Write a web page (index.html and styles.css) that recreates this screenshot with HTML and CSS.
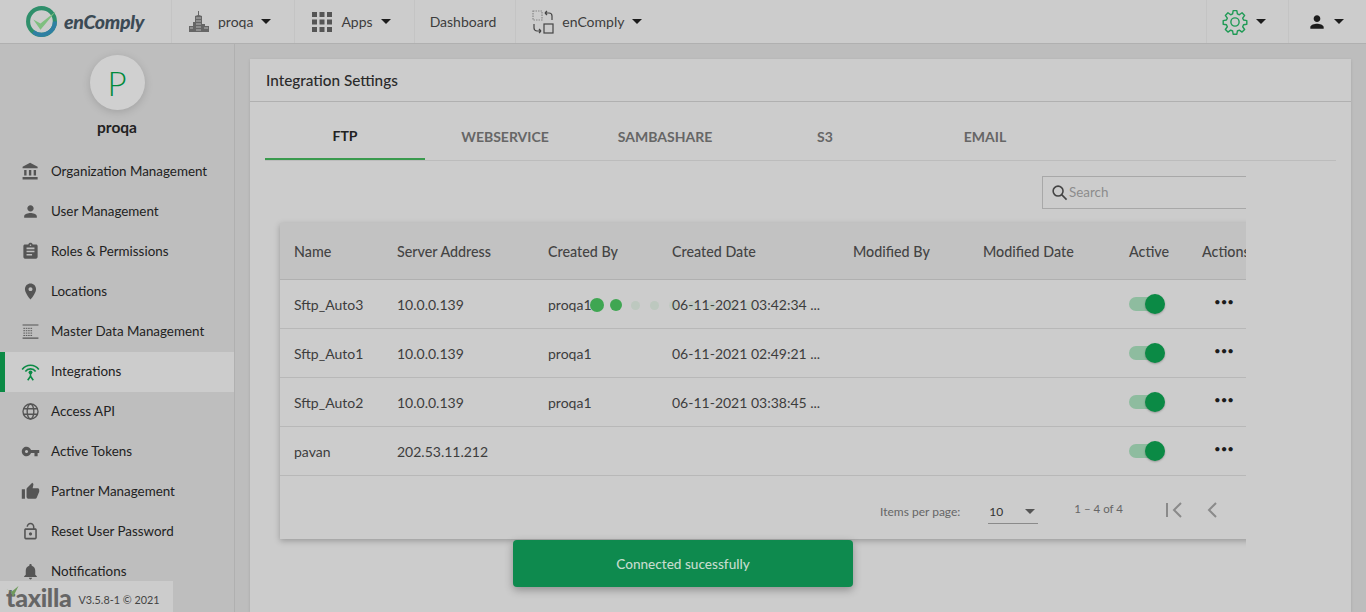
FILE: index.html
```html
<!DOCTYPE html>
<html lang="en">
<head>
<meta charset="utf-8"/>
<meta content="width=device-width, initial-scale=1.0" name="viewport"/>
<title>enComply – Integration Settings</title>
<link rel="stylesheet" href="styles.css">
</head>
<body>
<header class="topbar">
  <div class="brand">
    <svg class="brand-logo" viewBox="0 0 32 32" width="33" height="33">
      <circle cx="16" cy="16" r="13" fill="none" stroke="#2f8f6b" stroke-width="4"/>
      <path d="M29 16a13 13 0 0 1-21 10" fill="none" stroke="#2f7fa3" stroke-width="4"/>
      <path d="M8 14l7 4L30 6 15 24z" fill="#7fbf7f"/>
    </svg>
    <span class="brand-name">enComply</span>
  </div>
  <div class="top-item">
    <svg class="top-icon" viewBox="0 0 22 24" width="22" height="24"><path d="M1 22v-6h4v-4h2V6l3-1V1h1v4l3 1v8h3v2h4v6z" fill="#666"/><path d="M8 8h5M8 11h5M8 14h5M8 17h5M8 20h5M2 18h3M16 18h4" stroke="#ccc" stroke-width=".8"/></svg>
    <span>proqa</span><i class="caret"></i>
  </div>
  <div class="top-item">
    <svg class="top-icon" viewBox="0 0 22 22" width="22" height="22"><path d="M1 1h5v5H1zM8.500 1h5v5h-5zM16 1h5v5h-5zM1 8.500h5v5H1zM8.500 8.500h5v5h-5zM16 8.500h5v5h-5zM1 16h5v5H1zM8.500 16h5v5h-5zM16 16h5v5h-5z" fill="#555"/></svg>
    <span>Apps</span><i class="caret"></i>
  </div>
  <div class="top-item top-plain"><span>Dashboard</span></div>
  <div class="top-item">
    <svg class="top-icon" viewBox="0 0 22 24" width="22" height="24" fill="none" stroke="#444" stroke-width="1.200"><rect x="1" y="1" width="9" height="9" stroke="#888" stroke-dasharray="1.500 1"/><rect x="12" y="14" width="9" height="9"/><path d="M13 3h4a3 3 0 0 1 3 3v4M13 3l2-2M13 3l2 2M9 21H5a3 3 0 0 1-3-3v-4M9 21l-2-2M9 21l-2 2"/></svg>
    <span>enComply</span><i class="caret"></i>
  </div>
  <div class="top-right">
    <div class="top-item top-gear">
      <svg viewBox="0 0 24 24" width="26" height="26" fill="none" stroke="#1f9a55" stroke-width="1.300"><path d="M10.300 1.500h3.400l.5 3 1.800.8 2.500-1.800 2.400 2.400-1.800 2.500.8 1.800 3 .5v3.400l-3 .5-.8 1.800 1.800 2.500-2.400 2.400-2.500-1.800-1.800.8-.5 3h-3.400l-.5-3-1.800-.8-2.500 1.800-2.400-2.400 1.800-2.500-.8-1.800-3-.5v-3.400l3-.5.8-1.800-1.800-2.500 2.400-2.400 2.500 1.800 1.800-.8z" stroke-linejoin="round"/><circle cx="12" cy="12" r="3.800"/></svg>
      <i class="caret"></i>
    </div>
    <div class="top-item top-user">
      <svg viewBox="0 0 24 24" width="20" height="20"><path d="M12 12c2.210 0 4-1.790 4-4s-1.790-4-4-4-4 1.790-4 4 1.790 4 4 4zm0 2c-2.670 0-8 1.340-8 4v2h16v-2c0-2.660-5.330-4-8-4z" fill="#1c1c1c"/></svg>
      <i class="caret"></i>
    </div>
  </div>
</header>

<div class="layout">
  <aside class="sidebar">
    <div class="avatar">P</div>
    <div class="profile-name">proqa</div>
    <nav class="side-nav">
      <a class="side-item"><svg viewBox="0 0 24 24"><path d="M4 10v7h3v-7H4zm6 0v7h3v-7h-3zM2 22h19v-3H2v3zm14-12v7h3v-7h-3zm-4.500-9L2 6v2h19V6l-9.500-5z"/></svg>Organization Management</a>
      <a class="side-item"><svg viewBox="0 0 24 24"><path d="M12 12c2.210 0 4-1.790 4-4s-1.790-4-4-4-4 1.790-4 4 1.790 4 4 4zm0 2c-2.670 0-8 1.340-8 4v2h16v-2c0-2.660-5.330-4-8-4z"/></svg>User Management</a>
      <a class="side-item"><svg viewBox="0 0 24 24"><path d="M19 3h-4.180C14.400 1.840 13.300 1 12 1c-1.300 0-2.400.84-2.820 2H5c-1.100 0-2 .9-2 2v14c0 1.100.9 2 2 2h14c1.100 0 2-.9 2-2V5c0-1.100-.9-2-2-2zm-7 0c.55 0 1 .45 1 1s-.45 1-1 1-1-.45-1-1 .45-1 1-1zm2 14H7v-2h7v2zm3-4H7v-2h10v2zm0-4H7V7h10v2z"/></svg>Roles &amp; Permissions</a>
      <a class="side-item"><svg viewBox="0 0 24 24"><path d="M12 2C8.130 2 5 5.130 5 9c0 5.250 7 13 7 13s7-7.750 7-13c0-3.870-3.130-7-7-7zm0 9.500c-1.380 0-2.500-1.120-2.500-2.500s1.120-2.500 2.500-2.500 2.500 1.120 2.500 2.500-1.120 2.500-2.500 2.500z"/></svg>Locations</a>
      <a class="side-item"><svg viewBox="0 0 24 24"><path d="M2 3h20v1.500H2zM2 19.500h20V21H2z"/><path d="M3 8h12M3 11h12M3 14h12M3 17h12" stroke="#555" stroke-width="1.200" stroke-dasharray="2 1"/></svg>Master Data Management</a>
      <a class="side-item side-active"><svg viewBox="0 0 24 24" fill="none" stroke="#0b8a45" stroke-width="2"><path d="M1.500 9.500a13 13 0 0 1 21 0M5.500 12a8 8 0 0 1 13 0"/><circle cx="12" cy="13" r="2.400" fill="#0b8a45" stroke="none"/><path d="M12 14v5M12 18l-3.500 5M12 18l3.500 5"/></svg>Integrations</a>
      <a class="side-item"><svg viewBox="0 0 24 24" fill="none" stroke="#555" stroke-width="1.700"><circle cx="12" cy="12" r="9.500"/><ellipse cx="12" cy="12" rx="4.200" ry="9.500"/><path d="M3 8.500h18M3 15.500h18"/></svg>Access API</a>
      <a class="side-item"><svg viewBox="0 0 24 24"><path d="M12.650 10C11.830 7.670 9.610 6 7 6c-3.310 0-6 2.690-6 6s2.690 6 6 6c2.610 0 4.830-1.670 5.650-4H17v4h4v-4h2v-4H12.650zM7 14c-1.100 0-2-.9-2-2s.9-2 2-2 2 .9 2 2-.9 2-2 2z"/></svg>Active Tokens</a>
      <a class="side-item"><svg viewBox="0 0 24 24"><path d="M1 21h4V9H1v12zm22-11c0-1.100-.9-2-2-2h-6.310l.95-4.570.03-.32c0-.41-.17-.79-.44-1.060L14.170 1 7.590 7.590C7.220 7.950 7 8.450 7 9v10c0 1.100.9 2 2 2h9c.83 0 1.540-.5 1.840-1.220l3.020-7.050c.09-.23.14-.47.14-.73v-2z"/></svg>Partner Management</a>
      <a class="side-item"><svg viewBox="0 0 24 24"><path d="M12 17c1.100 0 2-.9 2-2s-.9-2-2-2-2 .9-2 2 .9 2 2 2zm6-9h-1V6c0-2.760-2.240-5-5-5S7 3.240 7 6h1.900c0-1.710 1.390-3.100 3.100-3.100 1.710 0 3.100 1.390 3.100 3.100v2H6c-1.100 0-2 .9-2 2v10c0 1.100.9 2 2 2h12c1.100 0 2-.9 2-2V10c0-1.100-.9-2-2-2zm0 12H6V10h12v10z"/></svg>Reset User Password</a>
      <a class="side-item"><svg viewBox="0 0 24 24"><path d="M12 22c1.100 0 2-.9 2-2h-4c0 1.100.89 2 2 2zm6-6v-5c0-3.070-1.640-5.640-4.500-6.320V4c0-.83-.67-1.500-1.500-1.500s-1.500.67-1.500 1.500v.68C7.630 5.360 6 7.920 6 11v5l-2 2v1h16v-1l-2-2z"/></svg>Notifications</a>
    </nav>
    <div class="powered">
      <span class="taxilla"><svg viewBox="0 0 12 10" width="14" height="11"><path d="M0 3l5 2 6-5-5 10-2-5z" fill="#6f9a5c"/></svg>taxilla</span>
      <span class="version">V3.5.8-1 © 2021</span>
    </div>
  </aside>

  <main class="content">
    <section class="card">
      <h2 class="card-title">Integration Settings</h2>
      <div class="tabs">
        <div class="tab tab-active">FTP</div>
        <div class="tab">WEBSERVICE</div>
        <div class="tab">SAMBASHARE</div>
        <div class="tab">S3</div>
        <div class="tab">EMAIL</div>
      </div>
      <div class="tab-body">
        <div class="search">
          <svg viewBox="0 0 24 24" width="17" height="17" fill="none" stroke="#444" stroke-width="2.200"><circle cx="10" cy="10" r="7"/><path d="M15 15l7 7"/></svg>
          <span>Search</span>
        </div>
        <div class="table-box">
          <table class="grid">
            <thead>
              <tr>
                <th class="c-name">Name</th><th class="c-addr">Server Address</th><th class="c-by">Created By</th><th class="c-date">Created Date</th><th class="c-mby">Modified By</th><th class="c-mdate">Modified Date</th><th class="c-active">Active</th><th class="c-actions">Actions</th>
              </tr>
            </thead>
            <tbody>
              <tr><td>Sftp_Auto3</td><td>10.0.0.139</td><td>proqa1</td><td>06-11-2021 03:42:34 ...</td><td></td><td></td><td><span class="toggle"></span></td><td><span class="more">•••</span></td></tr>
              <tr><td>Sftp_Auto1</td><td>10.0.0.139</td><td>proqa1</td><td>06-11-2021 02:49:21 ...</td><td></td><td></td><td><span class="toggle"></span></td><td><span class="more">•••</span></td></tr>
              <tr><td>Sftp_Auto2</td><td>10.0.0.139</td><td>proqa1</td><td>06-11-2021 03:38:45 ...</td><td></td><td></td><td><span class="toggle"></span></td><td><span class="more">•••</span></td></tr>
              <tr><td>pavan</td><td>202.53.11.212</td><td></td><td></td><td></td><td></td><td><span class="toggle"></span></td><td><span class="more">•••</span></td></tr>
            </tbody>
          </table>
          <div class="pager">
            <span class="pager-label">Items per page:</span>
            <div class="pager-select"><span>10</span><i class="caret caret-grey"></i></div>
            <span class="pager-range">1 – 4 of 4</span>
            <svg viewBox="0 0 24 24" width="24" height="24" fill="none" stroke="#8a8a8a" stroke-width="2"><path d="M5 5v14"/><path d="M19 5l-7 7 7 7"/></svg>
            <svg class="pager-prev" viewBox="0 0 24 24" width="24" height="24" fill="none" stroke="#8a8a8a" stroke-width="2"><path d="M16 5l-7 7 7 7"/></svg>
          </div>
        </div>
      </div>
    </section>
  </main>
</div>

<div class="loader">
  <i class="dot"></i><i class="dot dot-2"></i><i class="dot dot-faint"></i><i class="dot dot-faint"></i><i class="dot dot-fainter"></i><i class="dot dot-fainter"></i><i class="dot dot-fainter"></i><i class="dot dot-fainter"></i><i class="dot dot-fainter"></i>
</div>
<div class="toast">Connected sucessfully</div>
</body>
</html>
```

FILE: styles.css
```css
* {
  box-sizing: border-box;
}
html, body {
  height: 100%;
}
body {
  margin: 0;
  font-family: Lato, sans-serif;
  font-size: 14px;
  color: #333;
  background: #bdbdbd;
  display: flex;
  flex-direction: column;
  overflow: hidden;
}

/* top bar */
.topbar {
  flex: none;
  height: 44px;
  background: #ccc;
  border-bottom: 1px solid #b0b0b0;
  display: flex;
  align-items: stretch;
}
.brand {
  width: 171px;
  display: flex;
  align-items: center;
  padding-left: 25px;
  gap: 6px;
}
.brand-name {
  font-size: 19.5px;
  font-weight: 900;
  font-style: italic;
  color: #3b4a55;
  letter-spacing: -0.3px;
}
.top-item {
  display: flex;
  align-items: center;
  padding: 0 23px 0 16px;
  border-left: 1px solid #c4c4c4;
  color: #3d3d3d;
  font-size: 14px;
}
.top-plain {
  padding: 0 19px 0 15px;
}
.top-icon {
  margin-right: 8px;
}
.caret {
  display: inline-block;
  width: 0;
  height: 0;
  margin-left: 8px;
  border-left: 5px solid transparent;
  border-right: 5px solid transparent;
  border-top: 5px solid #1c1c1c;
}
.caret-grey {
  border-top-color: #555;
}
.topbar > .top-item:last-of-type {
  border-right: 1px solid #c4c4c4;
}
.top-right {
  margin-left: auto;
  display: flex;
}
.top-gear {
  width: 82px;
  padding: 0 0 0 15px;
}
.top-user {
  width: 78px;
  padding: 0 0 0 18px;
}
.top-user .caret {
  margin-left: 7px;
}

/* sidebar */
.layout {
  flex: 1;
  display: flex;
  min-height: 0;
}
.sidebar {
  width: 235px;
  flex: none;
  background: #bebebe;
  border-right: 1px solid #b0b0b0;
  overflow: hidden;
  position: relative;
}
.avatar {
  width: 55px;
  height: 55px;
  margin: 11px auto 0;
  border-radius: 50%;
  background: #d0d0d0;
  box-shadow: 0 2px 8px rgba(0,0,0,0.15);
  color: #008a3c;
  font-size: 33px;
  font-weight: 300;
  display: flex;
  align-items: center;
  justify-content: center;
}
.profile-name {
  margin-top: 8px;
  text-align: center;
  font-size: 15.5px;
  font-weight: 700;
  color: #222;
}
.side-nav {
  margin-top: 16px;
}
.side-item {
  height: 40px;
  display: flex;
  align-items: center;
  padding: 0 0 2px 21px;
  color: #222;
  font-size: 13.4px;
}
.side-item svg {
  width: 19px;
  height: 19px;
  margin-right: 11px;
  fill: #555;
  flex: none;
}
.side-active {
  background: #ccc;
  border-left: 5px solid #0b8a45;
  padding-left: 16px;
}
.side-item svg[fill="none"] {
  fill: none;
}
.powered {
  position: absolute;
  left: 0;
  bottom: 0;
  width: 173px;
  height: 31px;
  background: #ccc;
  display: flex;
  align-items: center;
  padding-left: 6px;
  gap: 7px;
}
.taxilla {
  font-size: 25px;
  font-weight: 900;
  line-height: 26px;
  color: #666;
  position: relative;
  letter-spacing: -0.3px;
}
.taxilla svg {
  position: absolute;
  left: 0;
  top: 2px;
}
.version {
  font-size: 10.8px;
  color: #444;
  padding-top: 5px;
}

/* main card */
.content {
  flex: 1;
  min-width: 0;
  padding: 15px 15px 0;
}
.card {
  height: 100%;
  background: #ccc;
  box-shadow: 0 1px 3px rgba(0,0,0,0.12);
}
.card-title {
  margin: 0;
  height: 43px;
  padding: 0 16px;
  line-height: 43px;
  font-size: 15.3px;
  font-weight: 500;
  color: #2a2a2a;
  border-bottom: 1px solid #b0b0b0;
}
.tabs {
  margin: 0 15px;
  height: 59px;
  display: flex;
  border-bottom: 1px solid #bcbcbc;
}
.tab {
  width: 160px;
  display: flex;
  align-items: center;
  justify-content: center;
  padding-top: 11px;
  font-size: 14px;
  font-weight: 700;
  color: #666;
}
.tab-active {
  color: #222;
  border-bottom: 2px solid #3a9a4e;
}
.tab-body {
  margin-left: 15px;
  width: 981px;
  overflow: hidden;
  padding-bottom: 30px;
}
.search {
  margin: 15px 0 0 777px;
  width: 230px;
  height: 33px;
  border: 1px solid #a8a8a8;
  display: flex;
  align-items: center;
  gap: 1px;
  padding: 0 0 1px 8px;
  color: #8c8c8c;
  font-size: 13.4px;
}

/* table */
.table-box {
  margin: 14px 0 0 15px;
  width: 1000px;
  background: #ccc;
  box-shadow: 0 2px 6px rgba(0,0,0,0.25);
}
.grid {
  width: 100%;
  border-collapse: collapse;
  table-layout: fixed;
}
.grid th {
  height: 56px;
  padding: 2px 0 0 14px;
  background: #c2c2c2;
  text-align: left;
  font-size: 14.3px;
  font-weight: 500;
  color: #444;
  border-bottom: 1px solid #b0b0b0;
  white-space: nowrap;
}
.grid td {
  height: 49px;
  padding: 2px 0 0 14px;
  color: #3d3d3d;
  font-size: 14px;
  border-bottom: 1px solid #b8b8b8;
  white-space: nowrap;
}
.c-name { width: 103px; }
.c-addr { width: 151px; }
.c-by { width: 124px; }
.c-date { width: 181px; }
.c-mby { width: 130px; }
.c-mdate { width: 146px; }
.c-active { width: 73px; }
.toggle {
  display: block;
  position: relative;
  width: 32px;
  height: 14px;
  margin-top: -2px;
  border-radius: 7px;
  background: #8ebc9f;
}
.toggle::after {
  content: "";
  position: absolute;
  right: -4px;
  top: -3px;
  width: 20px;
  height: 20px;
  border-radius: 50%;
  background: #0b8a45;
  box-shadow: 0 1px 2px rgba(0,0,0,0.25);
}
.more {
  display: block;
  margin: -6px 0 0 12px;
  font-size: 11.500px;
  color: #1c1c1c;
}
.pager {
  height: 63px;
  display: flex;
  align-items: center;
  padding: 5px 0 0 600px;
  font-size: 12px;
  color: #666;
}
.pager-label {
  font-size: 12px;
  padding-top: 4px;
}
.pager-select {
  width: 50px;
  height: 25px;
  margin: 4px 0 0 28px;
  display: flex;
  align-items: center;
  justify-content: space-between;
  border-bottom: 1px solid #8a8a8a;
  padding: 0 3px 0 1px;
  color: #333;
}
.pager-range {
  margin: -2px 39px 0 36px;
  font-size: 11.500px;
}
.pager-prev {
  margin-left: 14px;
}

/* loading dots and toast sit over the page */
.loader {
  position: absolute;
  left: 590px;
  top: 298px;
  display: flex;
  gap: 5px;
  align-items: center;
}
.dot {
  width: 14px;
  height: 14px;
  border-radius: 50%;
  background: #3fa652;
}
.dot-2 {
  width: 12px;
  height: 12px;
  margin: 0 1px;
}
.dot-faint {
  width: 9px;
  height: 9px;
  margin: 0 2.500px;
  background: rgba(63,166,82,0.1);
}
.dot-fainter {
  width: 9px;
  height: 9px;
  margin: 0 2.500px;
  background: rgba(63,166,82,0.08);
}
.toast {
  position: absolute;
  left: 513px;
  top: 540px;
  width: 340px;
  height: 47px;
  border-radius: 4px;
  background: #0e8a4e;
  box-shadow: 0 3px 8px rgba(0,0,0,0.3);
  color: #c5dccd;
  font-size: 13.6px;
  font-weight: 500;
  display: flex;
  align-items: center;
  justify-content: center;
}
```
